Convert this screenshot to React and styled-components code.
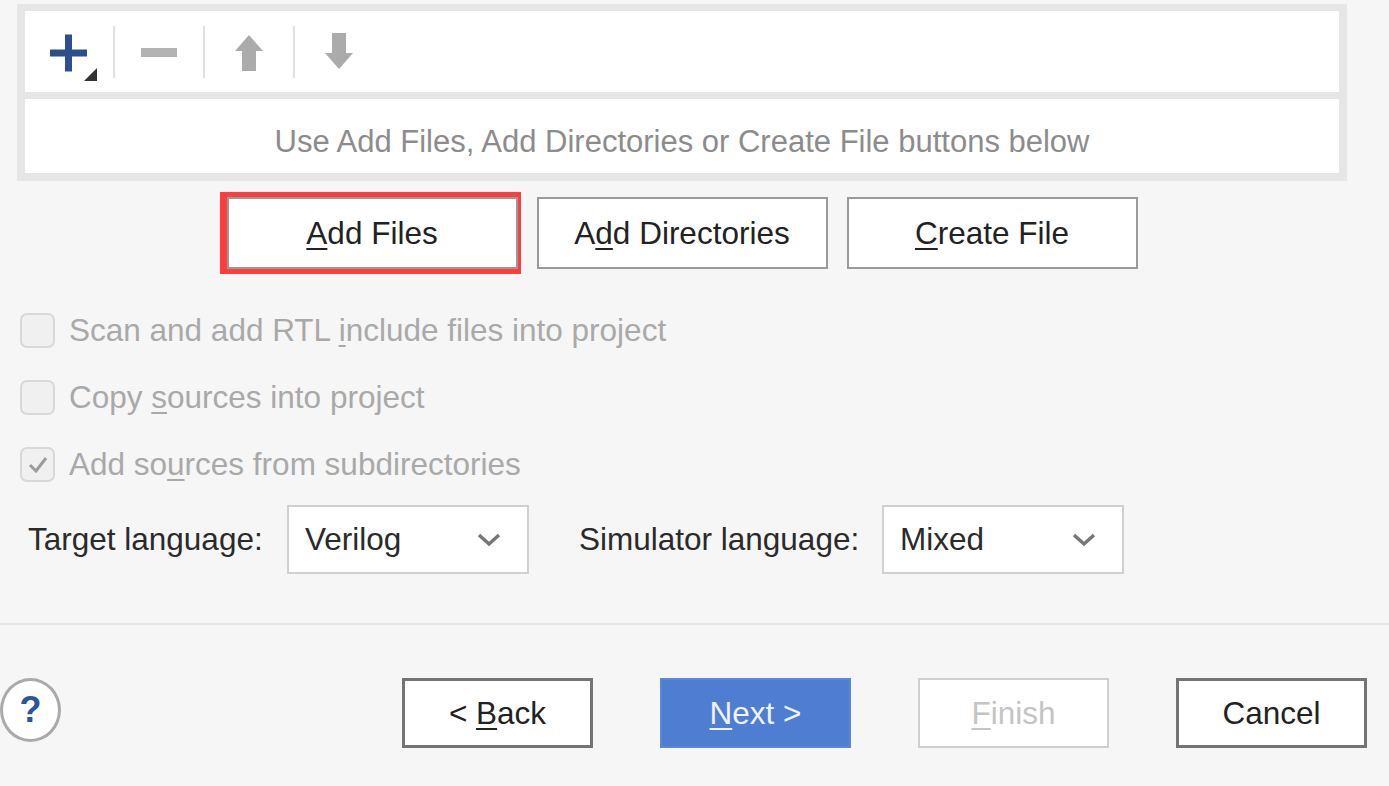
import React from "react";
import styled, { createGlobalStyle } from "styled-components";

const GlobalStyle = createGlobalStyle`
  body {
    margin: 0;
    background: #f6f6f6;
    font-family: "Liberation Sans", Arial, sans-serif;
  }
`;

const Page = styled.div`
  width: 1389px;
  height: 786px;
  overflow: hidden;
  box-sizing: border-box;
  padding-top: 4px;
  display: flex;
  flex-direction: column;
  color: #2a2a2a;
  font-size: 31.5px;
`;

// Source list panel
const FilePanel = styled.div`
  margin: 0 42px 0 17px;
  border: 8px solid #e6e6e6;
  border-top-width: 7px;
  background: #e6e6e6;
  display: flex;
  flex-direction: column;
  gap: 7px;
`;

const Toolbar = styled.div`
  height: 81px;
  background: #ffffff;
  display: flex;
  align-items: center;
`;

const ToolCell = styled.div`
  width: 88px;
  height: 60px;
  display: flex;
  align-items: center;
  justify-content: center;
`;

const ToolSeparator = styled.div`
  width: 2px;
  height: 52px;
  background: #e0e0e0;
`;

const HintArea = styled.div`
  height: 74px;
  box-sizing: border-box;
  padding-top: 12px;
  background: #ffffff;
  display: flex;
  align-items: center;
  justify-content: center;
  color: #8c8c8c;
  font-size: 31px;
`;

// Add buttons
const ActionRow = styled.div`
  margin: 16px 42px 0 17px;
  display: flex;
  justify-content: center;
  gap: 19px;
`;

const DialogButton = styled.button`
  width: ${(p) => p.width || 291}px;
  height: ${(p) => p.height || 72}px;
  box-sizing: border-box;
  padding: 0;
  font-family: inherit;
  font-size: 31.5px;
  background: ${(p) => (p.primary ? "#4e7dd1" : "#ffffff")};
  color: ${(p) => (p.primary ? "#eef3ff" : p.disabled ? "#c4c4c4" : "#222222")};
  border: ${(p) =>
    p.primary ? "2px solid #5b88d6" : p.disabled ? "2px solid #cfcfcf" : `${p.heavy ? 3 : 2}px solid ${p.heavy ? "#747474" : "#9a9a9a"}`};
  box-shadow: ${(p) => (p.highlight ? "-2px 0 0 5px #ff3d3d" : "none")};
  cursor: default;
`;

const Key = styled.span`
  text-decoration: underline;
  text-decoration-thickness: 2px;
  text-underline-offset: 4px;
`;

// Options
const OptionList = styled.div`
  margin-top: 28px;
  padding-left: 20px;
  display: flex;
  flex-direction: column;
`;

const OptionRow = styled.label`
  height: 67px;
  display: flex;
  align-items: center;
  gap: 14px;
  color: #a9a9a9;
`;

const CheckBox = styled.span`
  width: 35px;
  height: 35px;
  box-sizing: border-box;
  border: 2px solid #d8d8d8;
  border-radius: 7px;
  background: #f0f0f0;
  display: flex;
  align-items: center;
  justify-content: center;
`;

const LanguageRow = styled.div`
  margin-top: 7px;
  padding-left: 28px;
  height: 69px;
  display: flex;
  align-items: center;
`;

const FieldLabel = styled.span`
  width: ${(p) => p.width}px;
  margin-left: ${(p) => p.offset || 0}px;
  color: #2a2a2a;
`;

const Select = styled.div`
  width: 242px;
  height: 69px;
  box-sizing: border-box;
  border: 2px solid #d0d0d0;
  background: #ffffff;
  padding: 0 26px 0 16px;
  display: flex;
  align-items: center;
  justify-content: space-between;
  color: #2a2a2a;
`;

const Divider = styled.div`
  margin-top: 49px;
  height: 2px;
  background: #e4e4e4;
`;

const Footer = styled.div`
  margin-top: 53px;
  padding: 0 22px 0 0;
  height: 70px;
  display: flex;
  align-items: center;
`;

const HelpButton = styled.div`
  width: 61px;
  height: 64px;
  margin-top: -6px;
  box-sizing: border-box;
  border: 3px solid #aaaaaa;
  border-radius: 50%;
  background: #ffffff;
  display: flex;
  align-items: center;
  justify-content: center;
  color: #2f5597;
  font-weight: bold;
  font-size: 36px;
`;

const FooterButtons = styled.div`
  margin-left: auto;
  display: flex;
  gap: 67px;
`;

const PlusIcon = () => (
  <svg width="60" height="60" viewBox="0 0 60 60">
    <rect x="11" y="27.5" width="37" height="7" fill="#2d4f8e" />
    <rect x="26" y="12.5" width="7" height="37" fill="#2d4f8e" />
    <polygon points="58,46 58,59 45,59" fill="#333333" />
  </svg>
);

const MinusIcon = () => (
  <svg width="40" height="60" viewBox="0 0 40 60">
    <rect x="2" y="26" width="36" height="9" fill="#b3b3b3" />
  </svg>
);

const ArrowIcon = ({ down }) => (
  <svg width="30" height="60" viewBox="0 0 30 60" style={down ? { transform: "scaleY(-1)" } : undefined}>
    <polygon points="15,13 29,29 22,29 22,49 8,49 8,29 1,29" fill="#ababab" />
  </svg>
);

const Chevron = () => (
  <svg width="24" height="16" viewBox="0 0 24 16">
    <polyline points="2,3 12,12 22,3" fill="none" stroke="#777777" strokeWidth="3.5" />
  </svg>
);

const Check = () => (
  <svg width="24" height="24" viewBox="0 0 24 24">
    <polyline points="4,12 10,18 20,5" fill="none" stroke="#9c9c9c" strokeWidth="3" />
  </svg>
);

const App = () => {
  return (
    <Page>
      <GlobalStyle />
      <FilePanel>
        <Toolbar>
          <ToolCell><PlusIcon /></ToolCell>
          <ToolSeparator />
          <ToolCell><MinusIcon /></ToolCell>
          <ToolSeparator />
          <ToolCell><ArrowIcon /></ToolCell>
          <ToolSeparator />
          <ToolCell><ArrowIcon down /></ToolCell>
        </Toolbar>
        <HintArea>Use Add Files, Add Directories or Create File buttons below</HintArea>
      </FilePanel>

      <ActionRow>
        <DialogButton highlight><Key>A</Key>dd Files</DialogButton>
        <DialogButton>A<Key>d</Key>d Directories</DialogButton>
        <DialogButton><Key>C</Key>reate File</DialogButton>
      </ActionRow>

      <OptionList>
        <OptionRow>
          <CheckBox />
          <span>Scan and add RTL <Key>i</Key>nclude files into project</span>
        </OptionRow>
        <OptionRow>
          <CheckBox />
          <span>Copy <Key>s</Key>ources into project</span>
        </OptionRow>
        <OptionRow>
          <CheckBox><Check /></CheckBox>
          <span>Add so<Key>u</Key>rces from subdirectories</span>
        </OptionRow>
      </OptionList>

      <LanguageRow>
        <FieldLabel width={259}>Target language:</FieldLabel>
        <Select>Verilog<Chevron /></Select>
        <FieldLabel width={303} offset={50}>Simulator language:</FieldLabel>
        <Select>Mixed<Chevron /></Select>
      </LanguageRow>

      <Divider />

      <Footer>
        <HelpButton>?</HelpButton>
        <FooterButtons>
          <DialogButton width={191} height={70} heavy>&lt; <Key>B</Key>ack</DialogButton>
          <DialogButton width={191} height={70} primary><Key>N</Key>ext &gt;</DialogButton>
          <DialogButton width={191} height={70} disabled><Key>F</Key>inish</DialogButton>
          <DialogButton width={191} height={70} heavy>Cancel</DialogButton>
        </FooterButtons>
      </Footer>
    </Page>
  );
};

export default App;
